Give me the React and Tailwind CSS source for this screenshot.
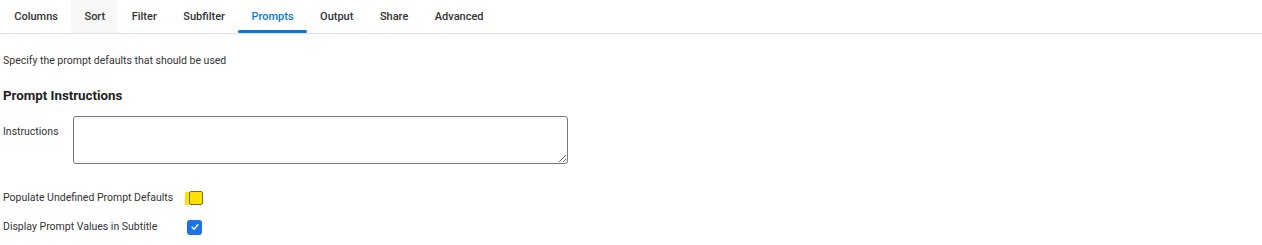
import { useState } from 'react'

const TABS = ['Columns', 'Sort', 'Filter', 'Subfilter', 'Prompts', 'Output', 'Share', 'Advanced']

export default function App() {
  const [active, setActive] = useState('Prompts')
  const [display, setDisplay] = useState(true)

  return (
    <div className="w-[1262px] h-[245px] bg-white text-[#333] font-['Roboto',sans-serif] overflow-hidden">
      {/* Tabs */}
      <div className="flex border-b border-[#dee2e6] h-[34px] pl-px">
        {TABS.map(t => (
          <button
            key={t}
            onClick={() => setActive(t)}
            className={`relative px-[13.25px] h-[33px] text-[11px] font-medium leading-none
              ${t === 'Sort' ? 'bg-[#f7f7f7]' : ''}
              ${t === active ? 'text-[#0a76e0]' : 'text-[#333]'}`}
          >
            {t}
            {t === active && (
              <span className="absolute left-0 right-0 bottom-0 h-[3px] bg-[#0a76e0] rounded-sm" />
            )}
          </button>
        ))}
      </div>

      <div className="px-[3px]">
        <p className="text-[10.5px] mt-[20px] leading-[14px] text-[#333]">Specify the prompt defaults that should be used</p>

        <h3 className="text-[13.3px] font-bold mt-[19px] leading-[18px] text-[#222]">Prompt Instructions</h3>

        <div className="flex mt-[11px]">
          <label className="text-[10.5px] w-[70px] pt-[9px] leading-[14px]">Instructions</label>
          <textarea className="w-[495px] h-[48px] border border-[#767b82] rounded-[3px] outline-none" />
        </div>

        <div className="flex items-center mt-[27px] h-[14px]">
          <span className="text-[10.5px] leading-[14px]">Populate Undefined Prompt Defaults</span>
          <span className="ml-[12px] flex items-center">
            <span className="w-[4px] h-[13px] bg-[#ffe100]" />
            <span className="w-[14px] h-[14px] bg-[#ffe100] border border-[#6b6b4a] rounded-[2px]" />
          </span>
        </div>

        <div className="flex items-center mt-[14px] h-[16px]">
          <span className="text-[10.5px] leading-[14px]">Display Prompt Values in Subtitle</span>
          <button
            onClick={() => setDisplay(d => !d)}
            className={`ml-[30px] w-[15px] h-[15px] rounded-[3px] flex items-center justify-center
              ${display ? 'bg-[#1a73e8]' : 'bg-white border border-[#767b82]'}`}
          >
            {display && (
              <svg viewBox="0 0 16 16" className="w-[10px] h-[10px]" fill="none" stroke="white" strokeWidth="2.2" strokeLinecap="round" strokeLinejoin="round">
                <path d="M3.5 8.5l3 3 6-7" />
              </svg>
            )}
          </button>
        </div>
      </div>
    </div>
  )
}
